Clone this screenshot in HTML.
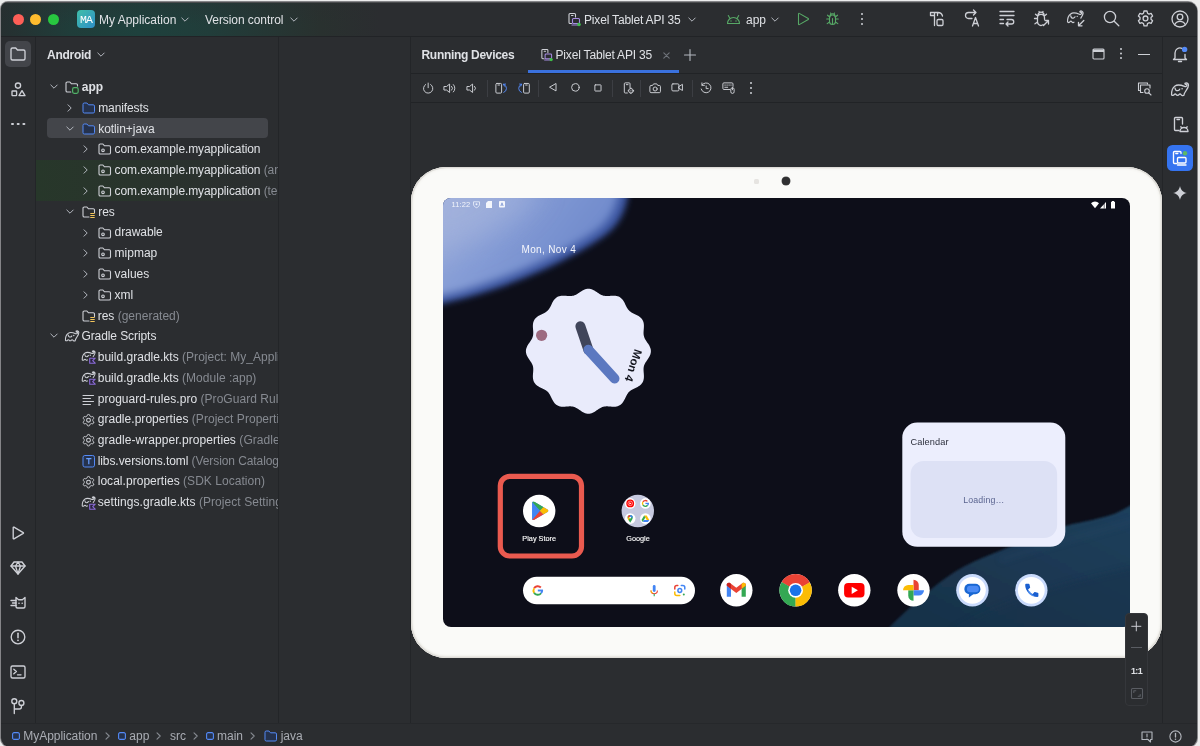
<!DOCTYPE html>
<html><head><meta charset="utf-8"><title>Android Studio</title>
<style>
*{box-sizing:border-box;margin:0;padding:0}
html,body{width:1200px;height:746px;overflow:hidden;background:#ececec;font-family:"Liberation Sans",sans-serif;font-size:12px;color:#dfe1e5}
#win{position:absolute;left:1px;top:1.5px;width:1196px;height:745px;background:#2b2d30;border-radius:7px 9px 9px 9px;overflow:hidden;box-shadow:0 0 0 1px #858588}
#in{position:absolute;left:-1px;top:-1.5px;width:1200px;height:746px;will-change:transform}
#in *{position:absolute}
#in svg *{position:static}
.t{white-space:nowrap;line-height:14px;height:14px}
.b{font-weight:bold}
.g{color:#868a91}
.hl{background:#212326;height:1px}
.vl{background:#232528;width:1px}
.sep{background:#3c3e43;width:1px;height:17px;top:79.5px}
svg{overflow:visible}
.i{fill:none;stroke:#ced0d6;stroke-width:1.1;stroke-linecap:round;stroke-linejoin:round}
</style></head><body>
<div id="win"><div id="in">
<!-- TITLEBAR -->
<div id="tb" style="left:0;top:0;width:1200px;height:36px;background:linear-gradient(180deg,rgba(43,45,48,.35) 0,rgba(43,45,48,0) 70%),linear-gradient(90deg,#262f30 0,#203d3a 70px,#1e413d 140px,#213d3a 210px,#29312f 320px,#2b2d30 380px)"></div>
<div class="hl" style="left:0;top:36px;width:1200px"></div>
<div style="left:0;top:1.5px;width:1200px;height:1.5px;background:linear-gradient(180deg,#58595b,#3c3e40)"></div>
<div style="left:12.500px;top:13.500px;width:11px;height:11px;border-radius:50%;background:#fe5f57"></div>
<div style="left:30px;top:13.500px;width:11px;height:11px;border-radius:50%;background:#febc2e"></div>
<div style="left:47.500px;top:13.500px;width:11px;height:11px;border-radius:50%;background:#28c840"></div>
<div style="left:77px;top:10px;width:18px;height:18px;border-radius:4px;background:linear-gradient(135deg,#3fbfa8,#2f8fc9)"></div>
<div class="t" style="left:77px;top:12.500px;width:18px;text-align:center;font-family:'Liberation Mono',monospace;font-size:11.500px;color:#fff;letter-spacing:-0.8px">MA</div>
<div class="t" style="left:99px;top:13px">My Application</div>
<svg style="left:181px;top:17px" width="8" height="6" viewBox="0 0 8 6"><path class="i" style="stroke:#b4b8bf;stroke-width:1" d="M0.8 1 L4 4.2 L7.2 1"/></svg>
<div class="t" style="left:205px;top:13px;letter-spacing:-0.07px">Version control</div>
<svg style="left:290px;top:17px" width="8" height="6" viewBox="0 0 8 6"><path class="i" style="stroke:#b4b8bf;stroke-width:1" d="M0.8 1 L4 4.2 L7.2 1"/></svg>
<!-- device selector -->
<svg style="left:567px;top:12px" width="14" height="14" viewBox="0 0 14 14"><path class="i" d="M4.5 11.5H3a1 1 0 0 1-1-1v-8a1 1 0 0 1 1-1h4.5a1 1 0 0 1 1 1V5"/><path d="M4.5 3.5h1.5" class="i"/><rect x="5.5" y="6.5" width="7" height="5" rx="1" class="i" style="stroke:#a58be0"/><path d="M5 13h6" class="i" style="stroke:#a58be0"/><circle cx="12" cy="12.5" r="1.8" fill="#3fc04a"/></svg>
<div class="t" style="left:584px;top:13px;letter-spacing:-0.17px">Pixel Tablet API 35</div>
<svg style="left:688px;top:17px" width="8" height="6" viewBox="0 0 8 6"><path class="i" style="stroke:#b4b8bf;stroke-width:1" d="M0.8 1 L4 4.2 L7.2 1"/></svg>
<!-- android app -->
<svg style="left:726px;top:13px" width="15" height="12" viewBox="0 0 15 12"><path d="M1.5 10.5a6 6 0 0 1 12 0z" class="i" style="stroke:#57a866"/><path d="M3.8 5.2L2.3 2.6M11.2 5.2l1.5-2.6" class="i" style="stroke:#57a866"/><circle cx="5" cy="8" r=".7" fill="#57a866"/><circle cx="10" cy="8" r=".7" fill="#57a866"/></svg>
<div class="t" style="left:746px;top:13px">app</div>
<svg style="left:771px;top:17px" width="8" height="6" viewBox="0 0 8 6"><path class="i" style="stroke:#b4b8bf;stroke-width:1" d="M0.8 1 L4 4.2 L7.2 1"/></svg>
<svg style="left:797px;top:12px" width="13" height="14" viewBox="0 0 13 14"><path d="M1.5 1.8v10.4a.5.5 0 0 0 .76.43l9-5.2a.5.5 0 0 0 0-.86l-9-5.2a.5.5 0 0 0-.76.43z" class="i" style="stroke:#57a866"/></svg>
<svg style="left:825px;top:11px" width="15" height="16" viewBox="0 0 15 16"><g class="i" style="stroke:#57a866"><path d="M4.5 7a3 3 0 0 1 6 0v3.5a3 3 0 0 1-6 0z"/><path d="M5 5.2a2.5 2.5 0 0 1 5 0M7.5 7.5v5M4.5 8H1.7M4.5 11l-2.3 1.6M4.7 6L2.5 4.2M10.5 8h2.8M10.5 11l2.3 1.6M10.3 6l2.2-1.8M5.5 2l.8 1.2M9.5 2l-.8 1.2"/></g></svg>
<g></g>
<div style="left:861px;top:13px;width:2px;height:2px;border-radius:50%;background:#ced0d6;box-shadow:0 5px 0 #ced0d6,0 10px 0 #ced0d6"></div>

<svg style="left:929px;top:10px" width="17" height="17" viewBox="0 0 17 17"><g class="i" style="stroke-width:1.3"><path d="M1.500 2.500h7.500c2.500 0 4 1.500 4.500 3.500M1.500 2.500v3h4M5.500 2.500v13M8.500 5.500v-3"/><rect x="8" y="9.500" width="6" height="6" rx="1.200"/></g></svg>
<svg style="left:964px;top:10px" width="17" height="17" viewBox="0 0 17 17"><g class="i" style="stroke-width:1.3"><path d="M8 8.500h-3.500a3 3 0 0 1 0-6h7.500M9.500 0l2.500 2.500-2.500 2.500"/><path d="M8.500 16l3-8.500 3 8.500M9.500 13.500h4"/></g></svg>
<svg style="left:999px;top:10px" width="16" height="17" viewBox="0 0 16 17"><g class="i" style="stroke-width:1.3"><path d="M1 1.500h14M1 5.500h14M1 9.500h3.500M1 13.500h3.500M8 9.500h4.500a2.200 2.200 0 0 1 0 4.500h-5.500M9 12l-2 2 2 2"/></g></svg>
<svg style="left:1033px;top:10px" width="17" height="17" viewBox="0 0 17 17"><g class="i" style="stroke-width:1.3"><path d="M10 14.800a3.500 3.500 0 0 1-5.500-3v-4a3.500 3.500 0 0 1 7 0v1.500M5 5.200a3 3 0 0 1 6 0M4.500 8.500h-3M4.500 12l-2.500 1.800M4.700 6l-2.200-1.800M11.300 6l2.200-1.800M6 1.500l.8 1.300M10 1.500l-.8 1.300M10.500 15.500l5-5M12 10.500h3.500v3.500"/></g></svg>
<svg style="left:1067px;top:11px" width="18" height="17" viewBox="0 0 18 17"><g transform="translate(0 -.8) scale(.92)"><path d="M.6 12.800C.4 9.500 1.600 5.800 4 4C6.500 2.200 10.500 3.200 13.500 4.400C14.800 4.900 15.900 4.200 15.900 3.100C15.900 2.300 15.100 1.900 14.300 2.400M13.900 1.300C15.400.3 17.400 1.200 17.500 3C17.600 5 16.300 6.800 15 8.600M.6 12.800C1.200 13.600 2.600 13.600 3.200 12.600C3.800 11.800 4.600 11.800 5.200 12.600C5.800 13.600 7 13.600 7.600 13M4.100 6.200C4.300 8 5.400 8.800 6.800 8.600C7.800 8.400 8.400 7.800 8.700 7.200" class="i" style="stroke-width:1.35"/><circle cx="11.100" cy="6.700" r=".8" fill="#ced0d6"/></g><path d="M16.800 9.500l-5.300 5.300M11.500 11.300v3.500h3.500" class="i" style="stroke-width:1.3"/></svg>
<svg style="left:1103px;top:10px" width="17" height="17" viewBox="0 0 17 17"><g class="i" style="stroke-width:1.3"><circle cx="7" cy="7" r="5.600"/><path d="M11.200 11.200l4.600 4.600"/></g></svg>
<svg style="left:1137px;top:10px" width="17" height="17" viewBox="0 0 17 17"><g class="i" style="stroke-width:1.3"><path d="M7 1h3l.5 2.200 1.500.9 2.100-.7 1.500 2.600-1.600 1.500v1.800l1.600 1.500-1.500 2.600-2.100-.7-1.500.9-.5 2.200h-3l-.5-2.200-1.500-.9-2.100.7-1.500-2.600 1.600-1.500v-1.800l-1.600-1.500 1.500-2.600 2.100.7 1.500-.9z"/><circle cx="8.500" cy="8.400" r="2.400"/></g></svg>
<svg style="left:1171px;top:10px" width="18" height="18" viewBox="0 0 18 18"><g class="i" style="stroke-width:1.3"><circle cx="9" cy="9" r="8"/><circle cx="9" cy="7" r="2.800"/><path d="M3.600 14.800c1-2.500 3-3.500 5.400-3.500s4.400 1 5.400 3.500"/></g></svg>

<!-- LEFT STRIPE -->
<div class="vl" style="left:35px;top:37px;height:686px"></div>
<div style="left:5px;top:41px;width:26px;height:26px;border-radius:5px;background:#43454a"></div>
<svg style="left:10px;top:47px" width="16" height="14" viewBox="0 0 16 14"><path class="i" style="stroke-width:1.35" d="M1 2.5a1.5 1.5 0 0 1 1.5-1.5h3.2l1.8 2h6a1.5 1.5 0 0 1 1.5 1.5v7a1.5 1.5 0 0 1-1.5 1.5h-11a1.5 1.5 0 0 1-1.5-1.5z"/></svg>
<svg style="left:11px;top:82px" width="15" height="15" viewBox="0 0 15 15"><g class="i" style="stroke-width:1.35"><circle cx="7" cy="3.6" r="2.6"/><rect x="1" y="9" width="4.6" height="4.6" rx=".6"/><path d="M11 8.6l3 5h-6z"/></g></svg>
<div style="left:11.400px;top:122.600px;width:2.200px;height:2.200px;border-radius:50%;background:#ced0d6;box-shadow:5.700px 0 0 #ced0d6,11.400px 0 0 #ced0d6"></div>
<!-- bottom -->
<svg style="left:12px;top:526px" width="13" height="14" viewBox="0 0 13 14"><path class="i" style="stroke-width:1.35" d="M1.2 1.6v10.8a.5.5 0 0 0 .76.43l9.3-5.4a.5.5 0 0 0 0-.86l-9.3-5.4a.5.5 0 0 0-.76.43z"/></svg>
<svg style="left:10px;top:561px" width="16" height="14" viewBox="0 0 16 14"><g class="i" style="stroke-width:1.35"><path d="M4 1h8l3 4-7 8-7-8z"/><path d="M1 5h14M5.5 5L8 1l2.500 4L8 13z"/></g></svg>
<svg style="left:10px;top:595px" width="17" height="15" viewBox="0 0 17 15"><g class="i" style="stroke-width:1.35"><path d="M6 2.500v9a1.500 1.500 0 0 0 1.500 1.500h6a1.500 1.500 0 0 0 1.500-1.500v-9l-2.600 2.200h-3.800z"/><path d="M1 5.500h5M2.500 8h3.500M1 10.500h5"/></g><circle cx="9" cy="8.300" r=".8" fill="#ced0d6"/><circle cx="12.200" cy="8.300" r=".8" fill="#ced0d6"/></svg>
<svg style="left:10px;top:629px" width="16" height="16" viewBox="0 0 16 16"><circle cx="8" cy="8" r="6.800" class="i" style="stroke-width:1.35"/><path d="M8 4.200v4.600" class="i" style="stroke-width:1.500"/><circle cx="8" cy="11.300" r=".9" fill="#ced0d6"/></svg>
<svg style="left:10px;top:665px" width="16" height="14" viewBox="0 0 16 14"><g class="i" style="stroke-width:1.35"><rect x="1" y="1" width="14" height="12" rx="1.500"/><path d="M3.800 4.200l2.600 2.300-2.600 2.300M7.500 9.800h3.500"/></g></svg>
<svg style="left:11px;top:698px" width="14" height="16" viewBox="0 0 14 16"><g class="i" style="stroke-width:1.35"><circle cx="3.300" cy="3.200" r="2.500"/><circle cx="10.400" cy="5" r="2.500"/><path d="M3.300 5.700v9.800M10.400 7.500v1.500a2 2 0 0 1-2 2h-5.100"/></g></svg>

<!-- PROJECT PANEL -->
<div class="vl" style="left:278px;top:37px;height:686px"></div>
<div class="t b" style="left:47px;top:48px;letter-spacing:-0.28px">Android</div>
<svg style="left:97px;top:52px" width="8" height="6" viewBox="0 0 8 6"><path class="i" style="stroke:#b4b8bf;stroke-width:1" d="M0.8 1 L4 4.2 L7.2 1"/></svg>
<div style="left:36px;top:160px;width:242px;height:41px;background:linear-gradient(90deg,#27372a 0,#29342c 40%,#2b2f2f 85%,#2b2e30 100%)"></div>
<div style="left:47px;top:118px;width:221px;height:20px;border-radius:4px;background:#43454a"></div>
<div style="left:36px;top:75px;width:242px;height:440px;overflow:hidden">
<div style="left:-36px;top:-74.6px;width:300px;height:600px">
<svg style="left:49.6px;top:84px" width="8" height="6" viewBox="0 0 8 6"><path class="i" style="stroke:#b4b8bf;stroke-width:1" d="M0.8 1 L4 4.2 L7.2 1"/></svg>
<svg style="left:65.3px;top:81px" width="13" height="12" viewBox="0 0 13 12"><path d="M5.800 11h-3.500a1.300 1.300 0 0 1-1.300-1.300v-7.400a1.300 1.300 0 0 1 1.300-1.300h2.600l1.600 1.800h4.700a1.300 1.300 0 0 1 1.300 1.300v.8" class="i" style="stroke:#ced0d6"/><rect x="7.600" y="6.700" width="5.600" height="5.600" rx="1.500" fill="#253627" stroke="#52b06a" stroke-width="1.200"/></svg>
<div class="t b" style="left:81.8px;top:80px;letter-spacing:0px">app</div>
<svg style="left:66.7px;top:103.8px" width="6" height="8" viewBox="0 0 6 8"><path class="i" style="stroke:#b4b8bf;stroke-width:1" d="M1 0.8 L4.2 4 L1 7.2"/></svg>
<svg style="left:81.5px;top:101.8px" width="13" height="12" viewBox="0 0 13 12"><path d="M1 2.3a1.3 1.3 0 0 1 1.3-1.3h2.6l1.6 1.8h4.700a1.300 1.300 0 0 1 1.300 1.300v5.600a1.300 1.300 0 0 1-1.300 1.300h-8.900a1.300 1.300 0 0 1-1.300-1.300z" fill="#25324d" stroke="#548af7" stroke-width="1"/></svg>
<div class="t" style="left:98.2px;top:101px;letter-spacing:-0.1px">manifests</div>
<svg style="left:65.7px;top:126px" width="8" height="6" viewBox="0 0 8 6"><path class="i" style="stroke:#b4b8bf;stroke-width:1" d="M0.8 1 L4 4.2 L7.2 1"/></svg>
<svg style="left:81.5px;top:123px" width="13" height="12" viewBox="0 0 13 12"><path d="M1 2.3a1.3 1.3 0 0 1 1.3-1.3h2.6l1.6 1.8h4.700a1.300 1.300 0 0 1 1.300 1.300v5.600a1.300 1.300 0 0 1-1.300 1.300h-8.900a1.300 1.300 0 0 1-1.300-1.300z" fill="#25324d" stroke="#548af7" stroke-width="1"/></svg>
<div class="t" style="left:98.2px;top:122px;letter-spacing:-0.06px">kotlin+java</div>
<svg style="left:83px;top:145px" width="6" height="8" viewBox="0 0 6 8"><path class="i" style="stroke:#b4b8bf;stroke-width:1" d="M1 0.8 L4.2 4 L1 7.2"/></svg>
<svg style="left:98.2px;top:143px" width="13" height="12" viewBox="0 0 13 12"><path d="M1 2.3a1.3 1.3 0 0 1 1.3-1.3h2.6l1.6 1.8h4.700a1.300 1.300 0 0 1 1.300 1.300v5.600a1.300 1.300 0 0 1-1.300 1.300h-8.900a1.300 1.300 0 0 1-1.300-1.300z" class="i" style="stroke:#ced0d6"/><circle cx="5" cy="7.300" r="1.300" class="i" style="stroke:#ced0d6"/></svg>
<div class="t" style="left:114.6px;top:142px;letter-spacing:-0.09px">com.example.myapplication</div>
<svg style="left:83px;top:166px" width="6" height="8" viewBox="0 0 6 8"><path class="i" style="stroke:#b4b8bf;stroke-width:1" d="M1 0.8 L4.2 4 L1 7.2"/></svg>
<svg style="left:98.2px;top:164px" width="13" height="12" viewBox="0 0 13 12"><path d="M1 2.3a1.3 1.3 0 0 1 1.3-1.3h2.6l1.6 1.8h4.700a1.300 1.300 0 0 1 1.300 1.300v5.600a1.300 1.300 0 0 1-1.300 1.300h-8.900a1.300 1.300 0 0 1-1.300-1.300z" class="i" style="stroke:#ced0d6"/><circle cx="5" cy="7.300" r="1.300" class="i" style="stroke:#ced0d6"/></svg>
<div class="t" style="left:114.6px;top:163px;letter-spacing:-0.09px">com.example.myapplication <span class="g" style="position:static">(androidTest)</span></div>
<svg style="left:83px;top:186.7px" width="6" height="8" viewBox="0 0 6 8"><path class="i" style="stroke:#b4b8bf;stroke-width:1" d="M1 0.8 L4.2 4 L1 7.2"/></svg>
<svg style="left:98.2px;top:184.7px" width="13" height="12" viewBox="0 0 13 12"><path d="M1 2.3a1.3 1.3 0 0 1 1.3-1.3h2.6l1.6 1.8h4.700a1.300 1.300 0 0 1 1.300 1.300v5.600a1.300 1.300 0 0 1-1.300 1.300h-8.900a1.300 1.300 0 0 1-1.300-1.300z" class="i" style="stroke:#ced0d6"/><circle cx="5" cy="7.300" r="1.300" class="i" style="stroke:#ced0d6"/></svg>
<div class="t" style="left:114.6px;top:184px;letter-spacing:-0.09px">com.example.myapplication <span class="g" style="position:static">(test)</span></div>
<svg style="left:65.7px;top:208.6px" width="8" height="6" viewBox="0 0 8 6"><path class="i" style="stroke:#b4b8bf;stroke-width:1" d="M0.8 1 L4 4.2 L7.2 1"/></svg>
<svg style="left:81.5px;top:205.6px" width="13" height="12" viewBox="0 0 13 12"><path d="M7 11h-4.700a1.300 1.300 0 0 1-1.300-1.300v-7.400a1.300 1.300 0 0 1 1.300-1.300h2.600l1.600 1.800h4.700a1.300 1.300 0 0 1 1.300 1.300v2.400" class="i" style="stroke:#ced0d6"/><path d="M8.300 7.500h4.400M8.300 9.500h4.400M8.300 11.500h4.400" stroke="#f2c55c" stroke-width="1.100"/></svg>
<div class="t" style="left:98.2px;top:205px;letter-spacing:0px">res</div>
<svg style="left:83px;top:228.3px" width="6" height="8" viewBox="0 0 6 8"><path class="i" style="stroke:#b4b8bf;stroke-width:1" d="M1 0.8 L4.2 4 L1 7.2"/></svg>
<svg style="left:98.2px;top:226.3px" width="13" height="12" viewBox="0 0 13 12"><path d="M1 2.3a1.3 1.3 0 0 1 1.3-1.3h2.6l1.6 1.8h4.700a1.300 1.300 0 0 1 1.300 1.300v5.600a1.300 1.300 0 0 1-1.300 1.300h-8.900a1.300 1.300 0 0 1-1.300-1.300z" class="i" style="stroke:#ced0d6"/><circle cx="5" cy="7.300" r="1.300" class="i" style="stroke:#ced0d6"/></svg>
<div class="t" style="left:114.6px;top:225px;letter-spacing:-0.08px">drawable</div>
<svg style="left:83px;top:249px" width="6" height="8" viewBox="0 0 6 8"><path class="i" style="stroke:#b4b8bf;stroke-width:1" d="M1 0.8 L4.2 4 L1 7.2"/></svg>
<svg style="left:98.2px;top:247px" width="13" height="12" viewBox="0 0 13 12"><path d="M1 2.3a1.3 1.3 0 0 1 1.3-1.3h2.6l1.6 1.8h4.700a1.300 1.300 0 0 1 1.300 1.300v5.600a1.300 1.300 0 0 1-1.300 1.300h-8.900a1.300 1.300 0 0 1-1.300-1.300z" class="i" style="stroke:#ced0d6"/><circle cx="5" cy="7.300" r="1.300" class="i" style="stroke:#ced0d6"/></svg>
<div class="t" style="left:114.6px;top:246px;letter-spacing:0px">mipmap</div>
<svg style="left:83px;top:269.8px" width="6" height="8" viewBox="0 0 6 8"><path class="i" style="stroke:#b4b8bf;stroke-width:1" d="M1 0.8 L4.2 4 L1 7.2"/></svg>
<svg style="left:98.2px;top:267.8px" width="13" height="12" viewBox="0 0 13 12"><path d="M1 2.3a1.3 1.3 0 0 1 1.3-1.3h2.6l1.6 1.8h4.700a1.300 1.300 0 0 1 1.300 1.300v5.600a1.300 1.300 0 0 1-1.300 1.300h-8.900a1.300 1.300 0 0 1-1.300-1.300z" class="i" style="stroke:#ced0d6"/><circle cx="5" cy="7.300" r="1.300" class="i" style="stroke:#ced0d6"/></svg>
<div class="t" style="left:114.6px;top:267px;letter-spacing:0px">values</div>
<svg style="left:83px;top:290.5px" width="6" height="8" viewBox="0 0 6 8"><path class="i" style="stroke:#b4b8bf;stroke-width:1" d="M1 0.8 L4.2 4 L1 7.2"/></svg>
<svg style="left:98.2px;top:288.5px" width="13" height="12" viewBox="0 0 13 12"><path d="M1 2.3a1.3 1.3 0 0 1 1.3-1.3h2.6l1.6 1.8h4.700a1.300 1.300 0 0 1 1.300 1.300v5.600a1.300 1.300 0 0 1-1.300 1.300h-8.900a1.300 1.300 0 0 1-1.300-1.300z" class="i" style="stroke:#ced0d6"/><circle cx="5" cy="7.300" r="1.300" class="i" style="stroke:#ced0d6"/></svg>
<div class="t" style="left:114.6px;top:288px;letter-spacing:0px">xml</div>
<svg style="left:81.5px;top:310px" width="13" height="12" viewBox="0 0 13 12"><path d="M7 11h-4.700a1.300 1.300 0 0 1-1.300-1.300v-7.400a1.300 1.300 0 0 1 1.300-1.300h2.600l1.600 1.800h4.700a1.300 1.300 0 0 1 1.300 1.300v2.400" class="i" style="stroke:#ced0d6"/><path d="M8.300 7.500h4.400M8.300 9.500h4.400M8.300 11.500h4.400" stroke="#f2c55c" stroke-width="1.100"/></svg>
<div class="t" style="left:97.7px;top:309px;letter-spacing:0px">res <span class="g" style="position:static">(generated)</span></div>
<svg style="left:49.6px;top:333px" width="8" height="6" viewBox="0 0 8 6"><path class="i" style="stroke:#b4b8bf;stroke-width:1" d="M0.8 1 L4 4.2 L7.2 1"/></svg>
<svg style="left:65.3px;top:330px" width="13" height="12" viewBox="0 0 13 12"><g transform="translate(0 .2) scale(.79)"><path d="M.6 12.800C.4 9.500 1.600 5.800 4 4C6.500 2.200 10.500 3.200 13.500 4.400C14.800 4.900 15.900 4.200 15.900 3.100C15.900 2.300 15.100 1.900 14.300 2.400M13.900 1.300C15.400.3 17.400 1.200 17.500 3C17.600 5.500 15.500 8 14.200 10C13.300 11.400 13 12.400 12.900 13.300M.6 12.800C1.200 13.600 2.600 13.600 3.200 12.600C3.800 11.800 4.600 11.800 5.200 12.600C5.800 13.600 7.400 13.600 8 12.600C8.600 11.800 9.400 11.800 10 12.600C10.600 13.600 12.200 13.800 12.900 13.300M4.100 6.200C4.300 8 5.400 8.800 6.800 8.600C7.800 8.400 8.400 7.800 8.700 7.200" class="i" style="stroke:#ced0d6;stroke-width:1.35"/><circle cx="11.100" cy="6.700" r=".9" fill="#ced0d6"/></g></svg>
<div class="t" style="left:81.4px;top:329px;letter-spacing:-0.08px">Gradle Scripts</div>
<svg style="left:81.5px;top:351px" width="13" height="12" viewBox="0 0 13 12"><g transform="translate(-.2 -.9) scale(.76)"><path d="M.6 12.800C.4 9.500 1.600 5.800 4 4C6.500 2.200 10.500 3.200 13.500 4.400C14.800 4.900 15.900 4.200 15.900 3.100C15.900 2.300 15.100 1.900 14.300 2.400M13.900 1.300C15.400.3 17.400 1.200 17.500 3C17.600 5 16.300 6.800 15 8.600M.6 12.800C1.200 13.600 2.600 13.600 3.200 12.600C3.800 11.800 4.600 11.800 5.200 12.600C5.800 13.600 7 13.600 7.600 13M4.100 6.200C4.300 8 5.400 8.800 6.800 8.600C7.800 8.400 8.400 7.800 8.700 7.200" class="i" style="stroke:#ced0d6;stroke-width:1.4"/><circle cx="11.100" cy="6.700" r=".9" fill="#ced0d6"/></g><path d="M6.400 5.900h7.800v7.400h-7.800z" fill="#2b2d30"/><path d="M13.200 7.200h-5.500v5h5.500l-2.500-2.500z" fill="#2a2340" stroke="#8a6bd6" stroke-width="1.100" stroke-linejoin="round"/></svg>
<div class="t" style="left:97.7px;top:350px;letter-spacing:0.02px">build.gradle.kts <span class="g" style="position:static">(Project: My_Application)</span></div>
<svg style="left:81.5px;top:371.7px" width="13" height="12" viewBox="0 0 13 12"><g transform="translate(-.2 -.9) scale(.76)"><path d="M.6 12.800C.4 9.500 1.600 5.800 4 4C6.500 2.200 10.500 3.200 13.500 4.400C14.800 4.900 15.900 4.200 15.900 3.100C15.900 2.300 15.100 1.900 14.300 2.400M13.900 1.300C15.400.3 17.400 1.200 17.500 3C17.600 5 16.300 6.800 15 8.600M.6 12.800C1.200 13.600 2.600 13.600 3.200 12.600C3.800 11.800 4.600 11.800 5.200 12.600C5.800 13.600 7 13.600 7.600 13M4.100 6.200C4.300 8 5.400 8.800 6.800 8.600C7.800 8.400 8.400 7.800 8.700 7.200" class="i" style="stroke:#ced0d6;stroke-width:1.4"/><circle cx="11.100" cy="6.700" r=".9" fill="#ced0d6"/></g><path d="M6.400 5.900h7.800v7.400h-7.800z" fill="#2b2d30"/><path d="M13.200 7.200h-5.500v5h5.500l-2.500-2.500z" fill="#2a2340" stroke="#8a6bd6" stroke-width="1.100" stroke-linejoin="round"/></svg>
<div class="t" style="left:97.7px;top:371px;letter-spacing:0.02px">build.gradle.kts <span class="g" style="position:static">(Module :app)</span></div>
<svg style="left:81.5px;top:392.5px" width="13" height="12" viewBox="0 0 13 12"><path d="M1 2.500h10.500M1 5.500h7.500M1 8.500h10.500M1 11.500h7.500" class="i" style="stroke:#ced0d6;stroke-width:1.100"/></svg>
<div class="t" style="left:97.7px;top:392px;letter-spacing:0.04px">proguard-rules.pro <span class="g" style="position:static">(ProGuard Rules for ":app")</span></div>
<svg style="left:81.5px;top:413.2px" width="13" height="12" viewBox="0 0 13 12"><path d="M11.48 9.07 L11.15 9.58 L10.53 9.82 L9.57 9.61 L9.00 9.64 L8.62 9.88 L8.23 10.08 L7.92 10.56 L7.63 11.50 L7.10 11.92 L6.50 11.95 L5.90 11.92 L5.37 11.50 L5.08 10.56 L4.77 10.08 L4.38 9.88 L4.00 9.64 L3.43 9.61 L2.47 9.82 L1.85 9.58 L1.52 9.08 L1.25 8.54 L1.35 7.87 L2.02 7.15 L2.27 6.64 L2.25 6.20 L2.27 5.76 L2.02 5.25 L1.35 4.53 L1.25 3.86 L1.52 3.33 L1.85 2.82 L2.47 2.58 L3.43 2.79 L4.00 2.76 L4.38 2.52 L4.77 2.32 L5.08 1.84 L5.37 0.90 L5.90 0.48 L6.50 0.45 L7.10 0.48 L7.63 0.90 L7.92 1.84 L8.23 2.32 L8.62 2.52 L9.00 2.76 L9.57 2.79 L10.53 2.58 L11.15 2.82 L11.48 3.33 L11.75 3.86 L11.65 4.53 L10.98 5.25 L10.73 5.76 L10.75 6.20 L10.73 6.64 L10.98 7.15 L11.65 7.87 L11.75 8.54Z" class="i" style="stroke:#ced0d6;stroke-width:1;stroke-linejoin:round"/><circle cx="6.500" cy="6.200" r="1.900" class="i" style="stroke:#ced0d6"/></svg>
<div class="t" style="left:97.7px;top:412px;letter-spacing:0.04px">gradle.properties <span class="g" style="position:static">(Project Properties)</span></div>
<svg style="left:81.5px;top:434px" width="13" height="12" viewBox="0 0 13 12"><path d="M11.48 9.07 L11.15 9.58 L10.53 9.82 L9.57 9.61 L9.00 9.64 L8.62 9.88 L8.23 10.08 L7.92 10.56 L7.63 11.50 L7.10 11.92 L6.50 11.95 L5.90 11.92 L5.37 11.50 L5.08 10.56 L4.77 10.08 L4.38 9.88 L4.00 9.64 L3.43 9.61 L2.47 9.82 L1.85 9.58 L1.52 9.08 L1.25 8.54 L1.35 7.87 L2.02 7.15 L2.27 6.64 L2.25 6.20 L2.27 5.76 L2.02 5.25 L1.35 4.53 L1.25 3.86 L1.52 3.33 L1.85 2.82 L2.47 2.58 L3.43 2.79 L4.00 2.76 L4.38 2.52 L4.77 2.32 L5.08 1.84 L5.37 0.90 L5.90 0.48 L6.50 0.45 L7.10 0.48 L7.63 0.90 L7.92 1.84 L8.23 2.32 L8.62 2.52 L9.00 2.76 L9.57 2.79 L10.53 2.58 L11.15 2.82 L11.48 3.33 L11.75 3.86 L11.65 4.53 L10.98 5.25 L10.73 5.76 L10.75 6.20 L10.73 6.64 L10.98 7.15 L11.65 7.87 L11.75 8.54Z" class="i" style="stroke:#ced0d6;stroke-width:1;stroke-linejoin:round"/><circle cx="6.500" cy="6.200" r="1.900" class="i" style="stroke:#ced0d6"/></svg>
<div class="t" style="left:97.7px;top:433px;letter-spacing:0.06px">gradle-wrapper.properties <span class="g" style="position:static">(Gradle Version)</span></div>
<svg style="left:81.5px;top:454.7px" width="13" height="12" viewBox="0 0 13 12"><rect x="1" y="0.500" width="11.500" height="11.500" rx="1.800" fill="#25324d" stroke="#548af7"/><path d="M4.200 3.600h5.200M6.800 3.600v5.600" stroke="#6aa0ff" stroke-width="1.200" fill="none"/></svg>
<div class="t" style="left:97.7px;top:454px;letter-spacing:-0.08px">libs.versions.toml <span class="g" style="position:static">(Version Catalog)</span></div>
<svg style="left:81.5px;top:475.5px" width="13" height="12" viewBox="0 0 13 12"><path d="M11.48 9.07 L11.15 9.58 L10.53 9.82 L9.57 9.61 L9.00 9.64 L8.62 9.88 L8.23 10.08 L7.92 10.56 L7.63 11.50 L7.10 11.92 L6.50 11.95 L5.90 11.92 L5.37 11.50 L5.08 10.56 L4.77 10.08 L4.38 9.88 L4.00 9.64 L3.43 9.61 L2.47 9.82 L1.85 9.58 L1.52 9.08 L1.25 8.54 L1.35 7.87 L2.02 7.15 L2.27 6.64 L2.25 6.20 L2.27 5.76 L2.02 5.25 L1.35 4.53 L1.25 3.86 L1.52 3.33 L1.85 2.82 L2.47 2.58 L3.43 2.79 L4.00 2.76 L4.38 2.52 L4.77 2.32 L5.08 1.84 L5.37 0.90 L5.90 0.48 L6.50 0.45 L7.10 0.48 L7.63 0.90 L7.92 1.84 L8.23 2.32 L8.62 2.52 L9.00 2.76 L9.57 2.79 L10.53 2.58 L11.15 2.82 L11.48 3.33 L11.75 3.86 L11.65 4.53 L10.98 5.25 L10.73 5.76 L10.75 6.20 L10.73 6.64 L10.98 7.15 L11.65 7.87 L11.75 8.54Z" class="i" style="stroke:#ced0d6;stroke-width:1;stroke-linejoin:round"/><circle cx="6.500" cy="6.200" r="1.900" class="i" style="stroke:#ced0d6"/></svg>
<div class="t" style="left:97.7px;top:474px;letter-spacing:0.04px">local.properties <span class="g" style="position:static">(SDK Location)</span></div>
<svg style="left:81.5px;top:496.2px" width="13" height="12" viewBox="0 0 13 12"><g transform="translate(-.2 -.9) scale(.76)"><path d="M.6 12.800C.4 9.500 1.600 5.800 4 4C6.500 2.200 10.500 3.200 13.500 4.400C14.800 4.900 15.900 4.200 15.900 3.100C15.900 2.300 15.100 1.900 14.300 2.400M13.900 1.300C15.400.3 17.400 1.200 17.500 3C17.600 5 16.300 6.800 15 8.600M.6 12.800C1.200 13.600 2.600 13.600 3.200 12.600C3.800 11.800 4.600 11.800 5.200 12.600C5.800 13.600 7 13.600 7.600 13M4.100 6.200C4.300 8 5.400 8.800 6.800 8.600C7.800 8.400 8.400 7.800 8.700 7.200" class="i" style="stroke:#ced0d6;stroke-width:1.4"/><circle cx="11.100" cy="6.700" r=".9" fill="#ced0d6"/></g><path d="M6.400 5.900h7.800v7.400h-7.800z" fill="#2b2d30"/><path d="M13.200 7.200h-5.500v5h5.500l-2.500-2.500z" fill="#2a2340" stroke="#8a6bd6" stroke-width="1.100" stroke-linejoin="round"/></svg>
<div class="t" style="left:97.7px;top:495px;letter-spacing:0.06px">settings.gradle.kts <span class="g" style="position:static">(Project Settings)</span></div>
</div></div>
<!-- RUNNING DEVICES -->
<div class="vl" style="left:410px;top:37px;height:686px"></div>
<div class="hl" style="left:411px;top:73px;width:751px"></div>
<div class="hl" style="left:411px;top:102px;width:751px"></div>
<div class="t b" style="left:421.500px;top:48px;letter-spacing:-0.3px">Running Devices</div>
<svg style="left:539.500px;top:48px" width="13" height="13" viewBox="0 0 14 14"><path class="i" d="M4.500 11.500H3a1 1 0 0 1-1-1v-8a1 1 0 0 1 1-1h4.500a1 1 0 0 1 1 1V5"/><path d="M4.500 3.500h1.500" class="i"/><rect x="5.500" y="6.500" width="7" height="5" rx="1" class="i" style="stroke:#a58be0"/><path d="M5 13h6" class="i" style="stroke:#a58be0"/><circle cx="12" cy="12.500" r="1.800" fill="#3fc04a"/></svg>
<div class="t" style="left:555.500px;top:48px;letter-spacing:-0.17px">Pixel Tablet API 35</div>
<svg style="left:663px;top:52px" width="7" height="7" viewBox="0 0 7 7"><path d="M.8.800l5.400 5.400M6.200.800L.8 6.200" class="i" style="stroke:#6f737a"/></svg>
<svg style="left:684px;top:49px" width="12" height="12" viewBox="0 0 12 12"><path d="M6 .500v11M.5 6h11" class="i" style="stroke:#b4b8bf;stroke-width:1.1"/></svg>
<div style="left:528px;top:70px;width:151px;height:3px;background:#3a71de"></div>
<!-- header right icons -->
<svg style="left:1092px;top:48px" width="13" height="12" viewBox="0 0 13 12"><rect x="1" y="1" width="11" height="10" rx="1" class="i"/><path d="M1 1.500h11v2.500h-11z" fill="#ced0d6"/></svg>
<div style="left:1120px;top:48px;width:2px;height:2px;border-radius:50%;background:#ced0d6;box-shadow:0 4.500px 0 #ced0d6,0 9px 0 #ced0d6"></div>
<div style="left:1138px;top:54px;width:12px;height:1px;background:#ced0d6"></div>
<!-- toolbar -->
<svg style="left:421.84px;top:81.64px" width="12.32" height="12.32" viewBox="0 0 14 14"><path d="M7 1.200v5.300M4.200 2.800a5.300 5.300 0 1 0 5.600 0" class="i"/></svg>
<svg style="left:442.96px;top:82.52px" width="14.08" height="10.56" viewBox="0 0 16 12"><path d="M1.500 4h2.500l3.500-2.800v9.600l-3.500-2.800h-2.500z M9.800 3.800a3 3 0 0 1 0 4.400M11.800 1.800a5.800 5.800 0 0 1 0 8.400" class="i"/></svg>
<svg style="left:465.72px;top:82.52px" width="10.56" height="10.56" viewBox="0 0 12 12"><path d="M1.500 4h2.500l3.500-2.800v9.600l-3.500-2.800h-2.500z M9.800 3.800a3 3 0 0 1 0 4.400" class="i"/></svg>
<div class="sep" style="left:487px"></div>
<svg style="left:494.90px;top:82.52px" width="13.20" height="10.56" viewBox="0 0 15 12"><rect x="1" y=".500" width="6.500" height="11" rx="1.200" class="i"/><path d="M3.300 2.300h1.800" class="i"/><path d="M10 1.500a5 5 0 0 1 0 9.200M9.800 1.500l2.200-.3M9.800 1.500l.8 2" class="i" style="stroke:#548af7"/></svg>
<svg style="left:516.90px;top:82.52px" width="13.20" height="10.56" viewBox="0 0 15 12"><rect x="7.500" y=".500" width="6.500" height="11" rx="1.200" class="i"/><path d="M9.800 2.300h1.800" class="i"/><path d="M5 1.500a5 5 0 0 0 0 9.200M5.200 1.500l-2.200-.3M5.200 1.500l-.8 2" class="i" style="stroke:#548af7"/></svg>
<div class="sep" style="left:538px"></div>
<svg style="left:548.54px;top:83.40px" width="7.92" height="8.80" viewBox="0 0 9 10"><path d="M8 1v8l-7-4z" class="i"/></svg>
<svg style="left:570.60px;top:83.40px" width="8.80" height="8.80" viewBox="0 0 10 10"><circle cx="5" cy="5" r="4.300" class="i"/></svg>
<svg style="left:593.54px;top:84.34px" width="7.92" height="7.92" viewBox="0 0 9 9"><rect x="1" y="1" width="7" height="7" rx=".5" class="i"/></svg>
<div class="sep" style="left:612px"></div>
<svg style="left:622.78px;top:81.64px" width="11.44" height="12.32" viewBox="0 0 13 14"><path d="M5 12.500h-2.500a1 1 0 0 1-1-1v-9.500a1 1 0 0 1 1-1h4.500a1 1 0 0 1 1 1v4.500" class="i"/><path d="M3.800 3h1.900" class="i"/><circle cx="9" cy="10" r="2.600" class="i"/><circle cx="9" cy="10" r=".7" fill="#ced0d6"/><path d="M9 6.800v.7M9 12.500v.7M5.800 10h.7M11.500 10h.7" class="i"/></svg>
<div class="sep" style="left:640px"></div>
<svg style="left:648.84px;top:82.52px" width="12.32" height="10.56" viewBox="0 0 14 12"><path d="M1 4a1.200 1.200 0 0 1 1.200-1.200h1.800l1.200-1.800h3.600l1.200 1.800h1.800a1.200 1.200 0 0 1 1.200 1.200v5.800a1.200 1.200 0 0 1-1.200 1.200h-9.600a1.200 1.200 0 0 1-1.200-1.200z" class="i"/><circle cx="7" cy="6.800" r="2.300" class="i"/></svg>
<svg style="left:670.84px;top:83.40px" width="12.32" height="8.80" viewBox="0 0 14 10"><rect x="1" y="1" width="8" height="8" rx="1.200" class="i"/><path d="M9 4l4-2.500v7l-4-2.500z" class="i"/></svg>
<div class="sep" style="left:692px"></div>
<svg style="left:699.84px;top:81.64px" width="12.32" height="12.32" viewBox="0 0 14 14"><path d="M2.200 3.500a5.600 5.600 0 1 1-.8 4.500M2.200 1v2.800h2.800" class="i"/><path d="M7 4.500v3h2.300" class="i"/></svg>
<svg style="left:721.90px;top:81.64px" width="13.20" height="12.32" viewBox="0 0 15 14"><path d="M9 8.500h-6.800a1.200 1.200 0 0 1-1.200-1.200v-5.100a1.200 1.200 0 0 1 1.200-1.200h9.100a1.200 1.200 0 0 1 1.200 1.200v2.800" class="i"/><path d="M3.200 3.500h.6M5.500 3.500h.6M7.800 3.500h.6M10 3.500h.4M3.200 6h3.300" class="i" style="stroke-width:1.100"/><rect x="10" y="6.500" width="3.800" height="6.500" rx="1.900" class="i"/><path d="M11.900 6.500v2.300" class="i"/></svg>
<div style="left:750px;top:82px;width:2px;height:2px;border-radius:50%;background:#ced0d6;box-shadow:0 5px 0 #ced0d6,0 10px 0 #ced0d6"></div>
<svg style="left:1137.00px;top:81.80px" width="15" height="14" viewBox="0 0 15 14"><path d="M2.500 8.500h-1v-7.500h9v1" class="i"/><path d="M6 10.500h-2.500v-7.500h9.500v3" class="i"/><circle cx="10" cy="9" r="2.300" class="i"/><path d="M11.800 10.800l2.200 2.200" class="i"/></svg>

<div style="left:411px;top:167px;width:751px;height:491px;border-radius:35px;background:#fafaf8;box-shadow:inset 0 0 0 1.3px #dedcd8, inset 0 -1px 2px 1px #ebeae4, inset 0 0 3px 1.5px #efeeea"></div>
<div style="left:782px;top:177px;width:8px;height:8px;border-radius:50%;background:#2f2f31;box-shadow:0 0 0 .5px #555"></div>
<div style="left:754px;top:178.5px;width:5px;height:5px;border-radius:1.5px;background:#e6e4e1"></div>
<div id="scr" style="left:442.500px;top:198px;width:687.500px;height:428.500px;border-radius:8px;background:#0d0e19;overflow:hidden">
<svg style="left:0;top:0" width="687.500" height="428.500" viewBox="442.500 198 687.500 428.500"><defs><filter id="bl" x="-20%" y="-20%" width="140%" height="140%"><feGaussianBlur stdDeviation="4.5"/></filter><filter id="bl3" x="-20%" y="-20%" width="140%" height="140%"><feGaussianBlur stdDeviation="3"/></filter><filter id="bl4" x="-5%" y="-5%" width="110%" height="110%"><feGaussianBlur stdDeviation=".8"/></filter><filter id="bl2" x="-20%" y="-20%" width="140%" height="140%"><feGaussianBlur stdDeviation="14"/></filter><linearGradient id="wg" x1="0" y1="0" x2="1" y2=".45"><stop offset="0" stop-color="#a3b2dc"/><stop offset=".45" stop-color="#869dd6"/><stop offset="1" stop-color="#6c87ca"/></linearGradient><linearGradient id="tg" x1="0" y1="1" x2="1" y2="0"><stop offset="0" stop-color="#183047"/><stop offset="1" stop-color="#1e405d"/></linearGradient></defs><path d="M420 180H629C628 210 619 226 601 238C570 259 520 283 465 298L420 309Z" fill="#3a55a0" filter="url(#bl3)"/><path d="M420 180H620C618 206 610 221 594 232C563 253 515 276 462 291L420 301Z" fill="url(#wg)" filter="url(#bl)"/><path d="M420 180H540C540 205 500 240 420 258Z" fill="#aab8de" opacity=".55" filter="url(#bl2)"/><path d="M886 632L890 626C900 616 911 606 922.500 596C933 587 943 579 954 572C967 564 981 558 995 552.500C1008 547 1021 542 1033.700 538C1044 534.500 1055 530 1065 526C1074 523 1083 522 1091.700 520C1099 518 1106 516.500 1113.400 514C1119 512 1124 509 1128 506.600L1140 500V632Z" fill="url(#tg)" filter="url(#bl4)"/><path d="M950 632C990 606 1050 584 1140 566V632Z" fill="#19334b" opacity=".5" filter="url(#bl3)"/><path d="M1000 560C1040 545 1090 535 1135 520" stroke="#284a68" stroke-width="3" fill="none" opacity=".5" filter="url(#bl3)"/></svg>
</div>
<div class="t" style="left:451.500px;top:198.500px;font-size:7.500px;line-height:11px;height:11px;color:#f2f4fb;letter-spacing:0.1px">11:22</div>
<svg style="left:473px;top:200.500px" width="7" height="7" viewBox="0 0 7 7"><path d="M.5.800h6v2.200c0 2-1.500 3.200-3 3.700c-1.500-.5-3-1.700-3-3.700z" fill="none" stroke="#eef1fb" stroke-width=".8"/><circle cx="3.500" cy="3.200" r="1" fill="#eef1fb"/></svg>
<svg style="left:486px;top:200.500px" width="6" height="7" viewBox="0 0 6 7"><path d="M2 0h4v7h-6v-5z" fill="#f4f6fc"/></svg>
<svg style="left:499px;top:200.500px" width="6" height="7" viewBox="0 0 6 7"><rect width="6" height="6.500" rx=".8" fill="#f4f6fc"/><path d="M1.800 5l1.200-3.200 1.200 3.200M2.300 4h1.400" stroke="#6f8bd0" stroke-width=".7" fill="none"/></svg>
<svg style="left:1091px;top:200.800px" width="28" height="8" viewBox="0 0 28 8"><path d="M0 2.300a5.500 5.500 0 0 1 8 0l-4 5z" fill="#fff"/><path d="M9 7.500l6-6.500v6.500z" fill="#fff"/><path d="M13.200 2v5.500" stroke="#0d0e19" stroke-width=".6"/><path d="M20 .800h1v-.8h2v.8h1v6.700h-4z" fill="#fff"/></svg>
<div class="t" style="left:521.500px;top:242.500px;font-size:10px;color:#f5f6fb;letter-spacing:0.34px">Mon, Nov 4</div>
<svg style="left:0;top:0" width="1200" height="746" viewBox="0 0 1200 746"><path d="M588.40 288.70 L589.49 288.76 L590.57 288.95 L591.65 289.26 L592.70 289.68 L593.74 290.18 L594.75 290.76 L595.74 291.39 L596.71 292.04 L597.67 292.70 L598.60 293.34 L599.53 293.94 L600.45 294.49 L601.38 294.96 L602.32 295.35 L603.28 295.66 L604.26 295.87 L605.27 296.01 L606.32 296.06 L607.39 296.05 L608.49 295.99 L609.63 295.91 L610.78 295.81 L611.95 295.73 L613.12 295.68 L614.29 295.69 L615.44 295.77 L616.56 295.94 L617.64 296.21 L618.67 296.58 L619.65 297.07 L620.56 297.67 L621.41 298.38 L622.18 299.18 L622.89 300.07 L623.53 301.03 L624.12 302.03 L624.67 303.07 L625.18 304.13 L625.67 305.17 L626.16 306.19 L626.67 307.18 L627.19 308.11 L627.76 308.99 L628.38 309.80 L629.06 310.54 L629.80 311.22 L630.61 311.84 L631.49 312.41 L632.42 312.93 L633.41 313.44 L634.43 313.93 L635.47 314.42 L636.53 314.93 L637.57 315.48 L638.57 316.07 L639.53 316.71 L640.42 317.42 L641.22 318.19 L641.93 319.04 L642.53 319.95 L643.02 320.93 L643.39 321.96 L643.66 323.04 L643.83 324.16 L643.91 325.31 L643.92 326.48 L643.87 327.65 L643.79 328.82 L643.69 329.97 L643.61 331.11 L643.55 332.21 L643.54 333.28 L643.59 334.33 L643.73 335.34 L643.94 336.32 L644.25 337.28 L644.64 338.22 L645.11 339.15 L645.66 340.07 L646.26 341.00 L646.90 341.93 L647.56 342.89 L648.21 343.86 L648.84 344.85 L649.42 345.86 L649.92 346.90 L650.34 347.95 L650.65 349.03 L650.84 350.11 L650.90 351.20 L650.84 352.29 L650.65 353.37 L650.34 354.45 L649.92 355.50 L649.42 356.54 L648.84 357.55 L648.21 358.54 L647.56 359.51 L646.90 360.47 L646.26 361.40 L645.66 362.33 L645.11 363.25 L644.64 364.18 L644.25 365.12 L643.94 366.08 L643.73 367.06 L643.59 368.07 L643.54 369.12 L643.55 370.19 L643.61 371.29 L643.69 372.43 L643.79 373.58 L643.87 374.75 L643.92 375.92 L643.91 377.09 L643.83 378.24 L643.66 379.36 L643.39 380.44 L643.02 381.47 L642.53 382.45 L641.93 383.36 L641.22 384.21 L640.42 384.98 L639.53 385.69 L638.57 386.33 L637.57 386.92 L636.53 387.47 L635.47 387.98 L634.43 388.47 L633.41 388.96 L632.42 389.47 L631.49 389.99 L630.61 390.56 L629.80 391.18 L629.06 391.86 L628.38 392.60 L627.76 393.41 L627.19 394.29 L626.67 395.22 L626.16 396.21 L625.67 397.23 L625.18 398.27 L624.67 399.33 L624.12 400.37 L623.53 401.37 L622.89 402.33 L622.18 403.22 L621.41 404.02 L620.56 404.73 L619.65 405.33 L618.67 405.82 L617.64 406.19 L616.56 406.46 L615.44 406.63 L614.29 406.71 L613.12 406.72 L611.95 406.67 L610.78 406.59 L609.63 406.49 L608.49 406.41 L607.39 406.35 L606.32 406.34 L605.27 406.39 L604.26 406.53 L603.28 406.74 L602.32 407.05 L601.38 407.44 L600.45 407.91 L599.53 408.46 L598.60 409.06 L597.67 409.70 L596.71 410.36 L595.74 411.01 L594.75 411.64 L593.74 412.22 L592.70 412.72 L591.65 413.14 L590.57 413.45 L589.49 413.64 L588.40 413.70 L587.31 413.64 L586.23 413.45 L585.15 413.14 L584.10 412.72 L583.06 412.22 L582.05 411.64 L581.06 411.01 L580.09 410.36 L579.13 409.70 L578.20 409.06 L577.27 408.46 L576.35 407.91 L575.42 407.44 L574.48 407.05 L573.52 406.74 L572.54 406.53 L571.53 406.39 L570.48 406.34 L569.41 406.35 L568.31 406.41 L567.17 406.49 L566.02 406.59 L564.85 406.67 L563.68 406.72 L562.51 406.71 L561.36 406.63 L560.24 406.46 L559.16 406.19 L558.13 405.82 L557.15 405.33 L556.24 404.73 L555.39 404.02 L554.62 403.22 L553.91 402.33 L553.27 401.37 L552.68 400.37 L552.13 399.33 L551.62 398.27 L551.13 397.23 L550.64 396.21 L550.13 395.22 L549.61 394.29 L549.04 393.41 L548.42 392.60 L547.74 391.86 L547.00 391.18 L546.19 390.56 L545.31 389.99 L544.38 389.47 L543.39 388.96 L542.37 388.47 L541.33 387.98 L540.27 387.47 L539.23 386.92 L538.23 386.33 L537.27 385.69 L536.38 384.98 L535.58 384.21 L534.87 383.36 L534.27 382.45 L533.78 381.47 L533.41 380.44 L533.14 379.36 L532.97 378.24 L532.89 377.09 L532.88 375.92 L532.93 374.75 L533.01 373.58 L533.11 372.43 L533.19 371.29 L533.25 370.19 L533.26 369.12 L533.21 368.07 L533.07 367.06 L532.86 366.08 L532.55 365.12 L532.16 364.18 L531.69 363.25 L531.14 362.33 L530.54 361.40 L529.90 360.47 L529.24 359.51 L528.59 358.54 L527.96 357.55 L527.38 356.54 L526.88 355.50 L526.46 354.45 L526.15 353.37 L525.96 352.29 L525.90 351.20 L525.96 350.11 L526.15 349.03 L526.46 347.95 L526.88 346.90 L527.38 345.86 L527.96 344.85 L528.59 343.86 L529.24 342.89 L529.90 341.93 L530.54 341.00 L531.14 340.07 L531.69 339.15 L532.16 338.22 L532.55 337.28 L532.86 336.32 L533.07 335.34 L533.21 334.33 L533.26 333.28 L533.25 332.21 L533.19 331.11 L533.11 329.97 L533.01 328.82 L532.93 327.65 L532.88 326.48 L532.89 325.31 L532.97 324.16 L533.14 323.04 L533.41 321.96 L533.78 320.93 L534.27 319.95 L534.87 319.04 L535.58 318.19 L536.38 317.42 L537.27 316.71 L538.23 316.07 L539.23 315.48 L540.27 314.93 L541.33 314.42 L542.37 313.93 L543.39 313.44 L544.38 312.93 L545.31 312.41 L546.19 311.84 L547.00 311.22 L547.74 310.54 L548.42 309.80 L549.04 308.99 L549.61 308.11 L550.13 307.18 L550.64 306.19 L551.13 305.17 L551.62 304.13 L552.13 303.07 L552.68 302.03 L553.27 301.03 L553.91 300.07 L554.62 299.18 L555.39 298.38 L556.24 297.67 L557.15 297.07 L558.13 296.58 L559.16 296.21 L560.24 295.94 L561.36 295.77 L562.51 295.69 L563.68 295.68 L564.85 295.73 L566.02 295.81 L567.17 295.91 L568.31 295.99 L569.41 296.05 L570.48 296.06 L571.53 296.01 L572.54 295.87 L573.52 295.66 L574.48 295.35 L575.42 294.96 L576.35 294.49 L577.27 293.94 L578.20 293.34 L579.13 292.70 L580.09 292.04 L581.06 291.39 L582.05 290.76 L583.06 290.18 L584.10 289.68 L585.15 289.26 L586.23 288.95 L587.31 288.76 L588.40 288.70Z" fill="#e9ebfb"/><circle cx="541.600" cy="335.300" r="5.600" fill="#9c6a80"/><path d="M588.4 349.8L580.4 326.3" stroke="#40455a" stroke-width="10" stroke-linecap="round"/><path d="M588.4 349.8L614.5 378.5" stroke="#5b78c0" stroke-width="10" stroke-linecap="round"/><text x="0" y="4" transform="translate(633.500 365.500) rotate(108)" text-anchor="middle" font-family="Liberation Sans,sans-serif" font-weight="bold" font-size="11.4" fill="#14161f">Mon 4</text></svg>
<svg style="left:0;top:0" width="1200" height="746" viewBox="0 0 1200 746">
<rect x="500.300" y="476.300" width="81.200" height="79.700" rx="9.500" fill="none" stroke="#ea5a4f" stroke-width="5.200"/>
<circle cx="539.2" cy="511" r="16.200" fill="#fff"/>
<g transform="translate(531.0 501.5)"><defs><clipPath id="pc"><path d="M1.200 1.400C1.200.3 2.300-.3 3.300.3L16.500 8c1 .6 1 2 0 2.600L3.300 18.300c-1 .6-2.100 0-2.100-1.100z"/></clipPath></defs><g clip-path="url(#pc)"><rect x="0" y="-1" width="20" height="21" fill="#4285f4"/><path d="M-1 -1L8.800 9.300L20 -1z" fill="#34a853"/><path d="M8.800 9.300L-1 20H20z" fill="#ea4335"/><path d="M8.800 9.300L12.500 5.500L20 5v9l-7.500-1z" fill="#fbbc04"/><path d="M0 -1v21L9 9.300z" fill="#4285f4"/></g></g>
<circle cx="637.8" cy="511" r="16.200" fill="#c6c9df"/>
<circle cx="630.1999999999999" cy="503.4" r="5.3" fill="#fff"/><circle cx="630.1999999999999" cy="503.4" r="3.900" fill="#f00"/><circle cx="630.1999999999999" cy="503.4" r="2.300" fill="none" stroke="#fff" stroke-width=".5"/><path d="M629.4 502.2l2.100 1.200-2.100 1.200z" fill="#fff"/>
<circle cx="645.4" cy="503.4" r="5.3" fill="#fff"/>
<path d="M647.45 501.35A2.9 2.9 0 0 0 642.89 501.95" fill="none" stroke="#ea4335" stroke-width="1.3"/><path d="M642.89 501.95A2.9 2.9 0 0 0 642.89 504.85" fill="none" stroke="#fbbc05" stroke-width="1.3"/><path d="M642.89 504.85A2.9 2.9 0 0 0 647.62 505.26" fill="none" stroke="#34a853" stroke-width="1.3"/><path d="M647.62 505.26A2.9 2.9 0 0 0 648.30 503.40" fill="none" stroke="#4285f4" stroke-width="1.3"/><path d="M645.40 503.40H648.95" stroke="#4285f4" stroke-width="1.3" fill="none"/>
<circle cx="630.1999999999999" cy="518.6" r="5.3" fill="#fff"/>
<g transform="translate(630.1999999999999 518.6)"><path d="M0 4.200C-1.200 2-2.600 .9-2.600-1A2.600 2.600 0 0 1 2.600-1C2.600 .9 1.200 2 0 4.200z" fill="#34a853"/><path d="M-2.600-1A2.600 2.600 0 0 1 0-3.600V-1z" fill="#ea4335"/><path d="M0-3.600A2.600 2.600 0 0 1 2.600-1H0z" fill="#4285f4"/><path d="M-2.600-1H0L-1.800 1.800C-2.300 1-2.600 0-2.600-1z" fill="#fbbc04"/><circle cx="0" cy="-1" r=".9" fill="#fff"/></g>
<circle cx="645.4" cy="518.6" r="5.3" fill="#fff"/>
<g transform="translate(645.4 518.6)"><path d="M-1.300-3.200H1.300L3.900 1.300H1.300z" fill="#fbbc04"/><path d="M-1.300-3.200L-3.900 1.300L-2.600 3.400L0-1z" fill="#34a853"/><path d="M-2.600 3.400H2.600L3.900 1.300H-1.300z" fill="#4285f4"/></g>
<rect x="523" y="576.700" width="172" height="27.500" rx="13.750" fill="#fff"/>
<path d="M540.84 587.46A4.3 4.3 0 0 0 534.08 588.35" fill="none" stroke="#ea4335" stroke-width="1.9"/><path d="M534.08 588.35A4.3 4.3 0 0 0 534.08 592.65" fill="none" stroke="#fbbc05" stroke-width="1.9"/><path d="M534.08 592.65A4.3 4.3 0 0 0 541.09 593.26" fill="none" stroke="#34a853" stroke-width="1.9"/><path d="M541.09 593.26A4.3 4.3 0 0 0 542.10 590.50" fill="none" stroke="#4285f4" stroke-width="1.9"/><path d="M537.80 590.50H543.05" stroke="#4285f4" stroke-width="1.9" fill="none"/>
<g transform="translate(654.200 590.500)"><rect x="-1.400" y="-5.500" width="2.800" height="7" rx="1.400" fill="#4285f4"/><path d="M-3.200 0a3.200 3.200 0 0 0 6.400 0" fill="none" stroke="#ea4335" stroke-width="1.100"/><path d="M-3.200 0a3.200 3.200 0 0 0 1.500 2.700" fill="none" stroke="#fbbc04" stroke-width="1.100"/><path d="M0 3.200v2.500" stroke="#34a853" stroke-width="1.100"/></g>
<g transform="translate(679.800 590.500)" fill="none" stroke-width="1.500" stroke-linecap="round"><path d="M-5 -1.500v-1.500a2 2 0 0 1 2-2h1" stroke="#ea4335"/><path d="M1.500-5h1.500a2 2 0 0 1 2 2v1.500" stroke="#4285f4"/><path d="M-5 1.500v1.500a2 2 0 0 0 2 2h3" stroke="#fbbc04"/><circle cx="0" cy="0" r="1.900" stroke="#4285f4"/><circle cx="4" cy="4" r="1" fill="#34a853" stroke="none"/></g>
<circle cx="736.3" cy="590.3" r="16.200" fill="#fff"/>
<g transform="translate(736.3 590.3)"><path d="M-9.500-6.500v13h4.200v-8.300z" fill="#4285f4"/><path d="M9.500-6.500v13h-4.200v-8.300z" fill="#34a853"/><path d="M-9.500-6.500L0 1L9.500-6.500L5.300-1.800v-3L0-.6L-5.300-4.800v3z" fill="#ea4335"/><path d="M-9.500-4.500v-1.200c0-1.600 1.900-2.500 3.200-1.500L0-2.600L6.300-7.200c1.300-1 3.200-.1 3.200 1.500v1.200L0 2.600z" fill="#ea4335"/><path d="M-9.500-5.700c0-1.600 1.900-2.500 3.200-1.500l1 .8v4.800l-4.200-3.200z" fill="#c5221f"/><path d="M9.500-5.700c0-1.600-1.900-2.500-3.200-1.500l-1 .8v4.800l4.200-3.200z" fill="#fbbc04"/></g>
<circle cx="795.6" cy="590.3" r="16.2" fill="#fff"/>
<path d="M795.6 590.3L781.57 582.20A16.2 16.2 0 0 1 809.63 582.20Z" fill="#ea4335"/>
<path d="M795.6 590.3L809.63 582.20A16.2 16.2 0 0 1 795.60 606.50Z" fill="#fbbc04"/>
<path d="M795.6 590.3L795.60 606.50A16.2 16.2 0 0 1 781.57 582.20Z" fill="#34a853"/>
<path d="M809.63 582.20L795.60 582.90L802.01 586.60Z" fill="#ea4335"/>
<path d="M795.60 606.50L802.01 594.00L795.60 597.70Z" fill="#fbbc04"/>
<path d="M781.57 582.20L789.19 594.00L789.19 586.60Z" fill="#34a853"/>
<circle cx="795.6" cy="590.3" r="7.4" fill="#fff"/><circle cx="795.6" cy="590.3" r="5.800" fill="#1a73e8"/>
<circle cx="854.3" cy="590.3" r="16.200" fill="#fff"/><rect x="844.0999999999999" y="583.0999999999999" width="20.400" height="14.400" rx="4" fill="#f00"/><path d="M851.6999999999999 586.6999999999999l6.200 3.600-6.200 3.600z" fill="#fff"/>
<circle cx="913.5" cy="590.3" r="16.200" fill="#fff"/>
<g transform="translate(913.5 590.3)"><path d="M0 0V-10.500A5.250 5.250 0 0 1 5.250-5.250V0z" fill="#ea4335"/><path d="M0 0H10.500A5.250 5.250 0 0 1 5.250 5.250H0z" fill="#4285f4"/><path d="M0 0V10.500A5.250 5.250 0 0 1-5.250 5.250V0z" fill="#34a853"/><path d="M0 0H-10.500A5.250 5.250 0 0 1-5.250-5.250H0z" fill="#fbbc04"/></g>
<circle cx="972.4" cy="590.3" r="16.200" fill="#c9dafc"/><circle cx="972.4" cy="590.3" r="13.400" fill="#fff"/>
<g transform="translate(972.4 590.3)"><rect x="-8" y="-6.600" width="16" height="10.600" rx="5" fill="#1967d2"/><path d="M-3.500 3L-3.500 7.300L1.500 3.500z" fill="#1967d2"/><rect x="-5.500" y="-4.600" width="12" height="6.600" rx="3.300" fill="#4a8af4"/></g>
<circle cx="1031.3" cy="590.3" r="16.200" fill="#c9dafc"/><circle cx="1031.3" cy="590.3" r="13.400" fill="#fff"/>
<g transform="translate(1031.3 590.3)"><path d="M-5.200-6.500h2.600c.4 0 .7.300.8.700l.6 2.700c.1.300 0 .7-.3.900l-1.700 1.500c1 2 2.500 3.500 4.500 4.500l1.500-1.700c.2-.3.600-.4.900-.3l2.700.6c.4.100.7.400.7.800v2.600c0 .5-.4.900-.9.900C-.5 6.500-6.300 .700-6.100-5.600c0-.5.400-.9.900-.9z" fill="#1a5fd0"/><path d="M-1.500 .8c1 2 2.500 3.500 4.500 4.500L1.200 6C-1 5-2.800 3.200-3.800 1z" fill="#5b9bf8" opacity=".7"/></g>
<rect x="902.300" y="422.500" width="163" height="124.300" rx="15" fill="#eceefd"/>
<rect x="910.600" y="461" width="146.500" height="77" rx="13" fill="#dde1f5"/>
</svg>
<div class="t" style="left:910.500px;top:436px;font-size:9.200px;line-height:12px;height:12px;color:#2c2f3c;letter-spacing:0.1px">Calendar</div>
<div class="t" style="left:910.600px;top:494px;width:146.500px;text-align:center;font-size:8.800px;line-height:12px;height:12px;color:#5b6590;letter-spacing:0.15px">Loading…</div>
<div class="t" style="left:499px;top:532.500px;width:80.400px;text-align:center;font-size:7.300px;line-height:11px;height:11px;color:#fff;-webkit-text-stroke:.12px #fff">Play Store</div>
<div class="t" style="left:597.800px;top:532.500px;width:80.400px;text-align:center;font-size:7.300px;line-height:11px;height:11px;color:#fff;-webkit-text-stroke:.12px #fff">Google</div>
<div style="left:1125px;top:613px;width:23px;height:93px;border-radius:4px;background:#2b2d30;border:1px solid #35373b"></div>
<svg style="left:1131.200px;top:620.500px" width="10.600" height="10.600" viewBox="0 0 12 12"><path d="M6 .800v10.400M.8 6h10.400" class="i" style="stroke:#ced0d6;stroke-width:1.100"/></svg>
<div style="left:1131px;top:647px;width:11px;height:1px;background:#5a5d63"></div>
<div class="t b" style="left:1126px;top:664px;width:21px;text-align:center;font-size:9px;letter-spacing:-.7px;color:#dfe1e5">1:1</div>
<svg style="left:1130.500px;top:688px" width="12" height="11" viewBox="0 0 12 11"><rect x=".5" y=".5" width="11" height="10" rx="1" class="i" style="stroke:#5a5d63"/><path d="M2.800 4.500v-1.800h2M9.200 6.500v1.800h-2" class="i" style="stroke:#5a5d63"/></svg>

<!-- RIGHT STRIPE -->
<div class="vl" style="left:1162px;top:37px;height:686px"></div>
<svg style="left:1172px;top:46px" width="16" height="17" viewBox="0 0 16 17"><g class="i" style="stroke-width:1.35"><path d="M3 12v-5a5 5 0 0 1 7-4.600M13 8.500v3.500l1.500 1.500h-13l1.500-1.500M6.500 15.500h3"/></g><circle cx="12.600" cy="3.400" r="2.700" fill="#548af7"/></svg>
<svg style="left:1171px;top:82px" width="18" height="14" viewBox="0 0 18 14"><path d="M.6 12.800C.4 9.500 1.600 5.800 4 4C6.500 2.200 10.500 3.200 13.500 4.400C14.800 4.900 15.900 4.200 15.900 3.100C15.900 2.300 15.100 1.900 14.300 2.400M13.900 1.300C15.400.3 17.400 1.200 17.500 3C17.600 5.500 15.500 8 14.200 10C13.300 11.400 13 12.400 12.900 13.300M.6 12.800C1.200 13.600 2.600 13.600 3.200 12.600C3.800 11.800 4.600 11.800 5.200 12.600C5.800 13.600 7.400 13.600 8 12.600C8.600 11.800 9.400 11.800 10 12.600C10.600 13.600 12.200 13.800 12.900 13.300M4.100 6.200C4.300 8 5.400 8.800 6.800 8.600C7.800 8.400 8.400 7.800 8.700 7.200" class="i" style="stroke-width:1.3"/><circle cx="11.100" cy="6.700" r=".8" fill="#ced0d6"/></svg>
<svg style="left:1173px;top:116px" width="16" height="17" viewBox="0 0 16 17"><g class="i" style="stroke-width:1.35"><path d="M6 14.500h-3.500a1 1 0 0 1-1-1v-11a1 1 0 0 1 1-1h6a1 1 0 0 1 1 1v5.500"/><path d="M4 3.500h2.500"/><path d="M7 15.500a4 4 0 0 1 8 0zM8.800 12.300l-1-1.600M13.200 12.300l1-1.600"/></g></svg>
<div style="left:1167px;top:145px;width:26px;height:26px;border-radius:5.500px;background:#3574f0"></div>
<svg style="left:1172px;top:150px" width="16" height="16" viewBox="0 0 16 16"><g class="i" style="stroke:#fff;stroke-width:1.35"><path d="M5 13.500h-2.500a1 1 0 0 1-1-1v-10a1 1 0 0 1 1-1h5.500a1 1 0 0 1 1 1v1"/><path d="M3.800 3.500h2"/><rect x="5.500" y="7.500" width="8.500" height="5.500" rx="1"/><path d="M5.500 15h8.500"/></g><circle cx="13" cy="3.200" r="2.200" fill="#5fb865"/></svg>
<svg style="left:1173px;top:186px" width="14" height="14" viewBox="0 0 14 14"><path d="M7 0c.6 3.800 3.200 6.400 7 7-3.800.6-6.400 3.200-7 7-.6-3.800-3.200-6.400-7-7 3.800-.6 6.400-3.200 7-7z" fill="#ced0d6"/></svg>

<!-- STATUS BAR -->
<div class="hl" style="left:0;top:723px;width:1200px;background:#26282b"></div>
<svg style="left:12px;top:732px" width="8" height="8" viewBox="0 0 8 8"><rect x=".6" y=".6" width="6.800" height="6.800" rx="1.500" fill="#25324d" stroke="#548af7" stroke-width="1.100"/></svg>
<div class="t" style="left:23.300px;top:729px;color:#a9acb3;letter-spacing:-0.05px">MyApplication</div>
<svg style="left:105px;top:732px" width="6" height="8" viewBox="0 0 6 8"><path class="i" style="stroke:#868a91" d="M1 .800L4.200 4 1 7.200"/></svg>
<svg style="left:118px;top:732px" width="8" height="8" viewBox="0 0 8 8"><rect x=".6" y=".6" width="6.800" height="6.800" rx="1.500" fill="#25324d" stroke="#548af7" stroke-width="1.100"/></svg>
<div class="t" style="left:129.300px;top:729px;color:#a9acb3">app</div>
<svg style="left:156px;top:732px" width="6" height="8" viewBox="0 0 6 8"><path class="i" style="stroke:#868a91" d="M1 .800L4.200 4 1 7.200"/></svg>
<div class="t" style="left:170px;top:729px;color:#a9acb3">src</div>
<svg style="left:193px;top:732px" width="6" height="8" viewBox="0 0 6 8"><path class="i" style="stroke:#868a91" d="M1 .800L4.200 4 1 7.200"/></svg>
<svg style="left:206px;top:732px" width="8" height="8" viewBox="0 0 8 8"><rect x=".6" y=".6" width="6.800" height="6.800" rx="1.500" fill="#25324d" stroke="#548af7" stroke-width="1.100"/></svg>
<div class="t" style="left:217px;top:729px;color:#a9acb3">main</div>
<svg style="left:250px;top:732px" width="6" height="8" viewBox="0 0 6 8"><path class="i" style="stroke:#868a91" d="M1 .800L4.200 4 1 7.200"/></svg>
<svg style="left:263.500px;top:730px" width="13" height="12" viewBox="0 0 13 12"><path d="M1 2.300a1.300 1.300 0 0 1 1.300-1.300h2.600l1.600 1.800h4.700a1.300 1.300 0 0 1 1.300 1.300v5.600a1.300 1.300 0 0 1-1.300 1.300h-8.900a1.300 1.300 0 0 1-1.300-1.300z" fill="#25324d" stroke="#548af7" stroke-width="1"/></svg>
<div class="t" style="left:280.700px;top:729px;color:#a9acb3">java</div>
<svg style="left:1141px;top:731px" width="12" height="12" viewBox="0 0 12 12"><path d="M1 1h10v7.500h-1.500v2.500l-2.500-2.500h-6z" class="i" style="stroke:#b4b8bf"/><path d="M6 3v2.500" class="i" style="stroke:#b4b8bf"/><circle cx="6" cy="7" r=".6" fill="#b4b8bf"/></svg>
<svg style="left:1169px;top:730px" width="13" height="13" viewBox="0 0 13 13"><circle cx="6.500" cy="6.500" r="5.600" class="i" style="stroke:#b4b8bf"/><path d="M6.500 3.500v3.600" class="i" style="stroke:#b4b8bf;stroke-width:1.300"/><circle cx="6.500" cy="9.300" r=".8" fill="#b4b8bf"/></svg>

</div></div>
</body></html>
